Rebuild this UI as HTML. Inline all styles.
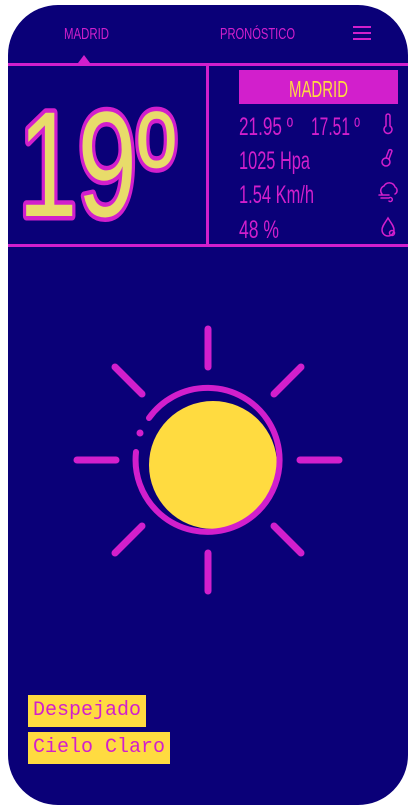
<!DOCTYPE html>
<html><head><meta charset="utf-8"><style>
html,body{margin:0;padding:0;background:#fff;width:418px;height:811px;overflow:hidden}
.card{position:absolute;left:8px;top:5px;width:400px;height:800px;background:#0a0078;border-radius:50px;overflow:hidden}
svg{position:absolute;left:0;top:0}
.lbl{position:absolute;left:28px;background:#ffdb40;color:#d21fcc;font-family:"Liberation Mono",monospace;font-size:20px;height:32px;line-height:32px;padding:0 5px;box-sizing:border-box;white-space:nowrap}
</style></head><body>
<div class="card"></div>
<svg width="418" height="811" viewBox="0 0 418 811" font-family="Liberation Sans, sans-serif">
<g fill="#d21fcc">
<text x="64" y="39" font-size="16" textLength="45" lengthAdjust="spacingAndGlyphs">MADRID</text>
<text x="220" y="39" font-size="16" textLength="75" lengthAdjust="spacingAndGlyphs">PRONÓSTICO</text>
<rect x="353" y="26" width="18" height="2"/><rect x="353" y="32" width="18" height="2"/><rect x="353" y="38" width="18" height="2"/>
<polygon points="78,63 84,55 90,63"/>
<rect x="8" y="63" width="400" height="3"/>
<rect x="206" y="66" width="3" height="180"/>
<rect x="8" y="244" width="400" height="3"/>
<rect x="239" y="70" width="159" height="34"/>
</g>
<text x="289" y="97" font-size="23" fill="#ffdb40" textLength="59" lengthAdjust="spacingAndGlyphs">MADRID</text>
<text x="18" y="216" font-size="150" fill="#e8dc6a" stroke="#d21fcc" stroke-width="9" stroke-linejoin="round" paint-order="stroke" textLength="158" lengthAdjust="spacingAndGlyphs">19º</text>
<g fill="#d21fcc" font-size="25">
<text x="239" y="135" textLength="54" lengthAdjust="spacingAndGlyphs">21.95 º</text>
<text x="311" y="135" textLength="49" lengthAdjust="spacingAndGlyphs">17.51 º</text>
<text x="239" y="169" textLength="71" lengthAdjust="spacingAndGlyphs">1025 Hpa</text>
<text x="239" y="203" textLength="75" lengthAdjust="spacingAndGlyphs">1.54 Km/h</text>
<text x="239" y="238" textLength="40" lengthAdjust="spacingAndGlyphs">48 %</text>
</g>
<g fill="none" stroke="#d21fcc" stroke-width="1.5" stroke-linecap="round">
<path d="M386 116v10a4 4 0 1 0 4 0v-10a2 2 0 0 0-4 0z"/>
<circle cx="386" cy="162" r="4"/><path d="M386 158l3-8a2 2 0 0 1 3 1l-3 8"/>
<path d="M382 194a5 5 0 0 1 2-8a6 6 0 0 1 11 1a4 4 0 0 1 0 7M379 195h10M381 198h8a2 2 0 1 1 0 3"/>
<path d="M388 218c-3 5-6 8-6 12a6 6 0 0 0 12 0c0-4-3-7-6-12z"/><circle cx="392" cy="233" r="2.5"/>
</g>
<g stroke="#d21fcc" stroke-width="7" stroke-linecap="round" fill="none">
<line x1="208" y1="329" x2="208" y2="367"/>
<line x1="208" y1="553" x2="208" y2="591"/>
<line x1="77" y1="460" x2="116" y2="460"/>
<line x1="300" y1="460" x2="339" y2="460"/>
<line x1="115" y1="367" x2="142" y2="394"/>
<line x1="274" y1="526" x2="301" y2="553"/>
<line x1="301" y1="367" x2="274" y2="394"/>
<line x1="142" y1="526" x2="115" y2="553"/>
</g>
<circle cx="213" cy="465" r="64" fill="#ffdb40"/>
<path d="M149 418 A72 72 0 1 1 136 452" fill="none" stroke="#d21fcc" stroke-width="6" stroke-linecap="round"/>
<circle cx="140" cy="433" r="3.5" fill="#d21fcc"/>
</svg>
<div class="lbl" style="top:695px;width:118px">Despejado</div>
<div class="lbl" style="top:732px;width:142px">Cielo Claro</div>
</body></html>
